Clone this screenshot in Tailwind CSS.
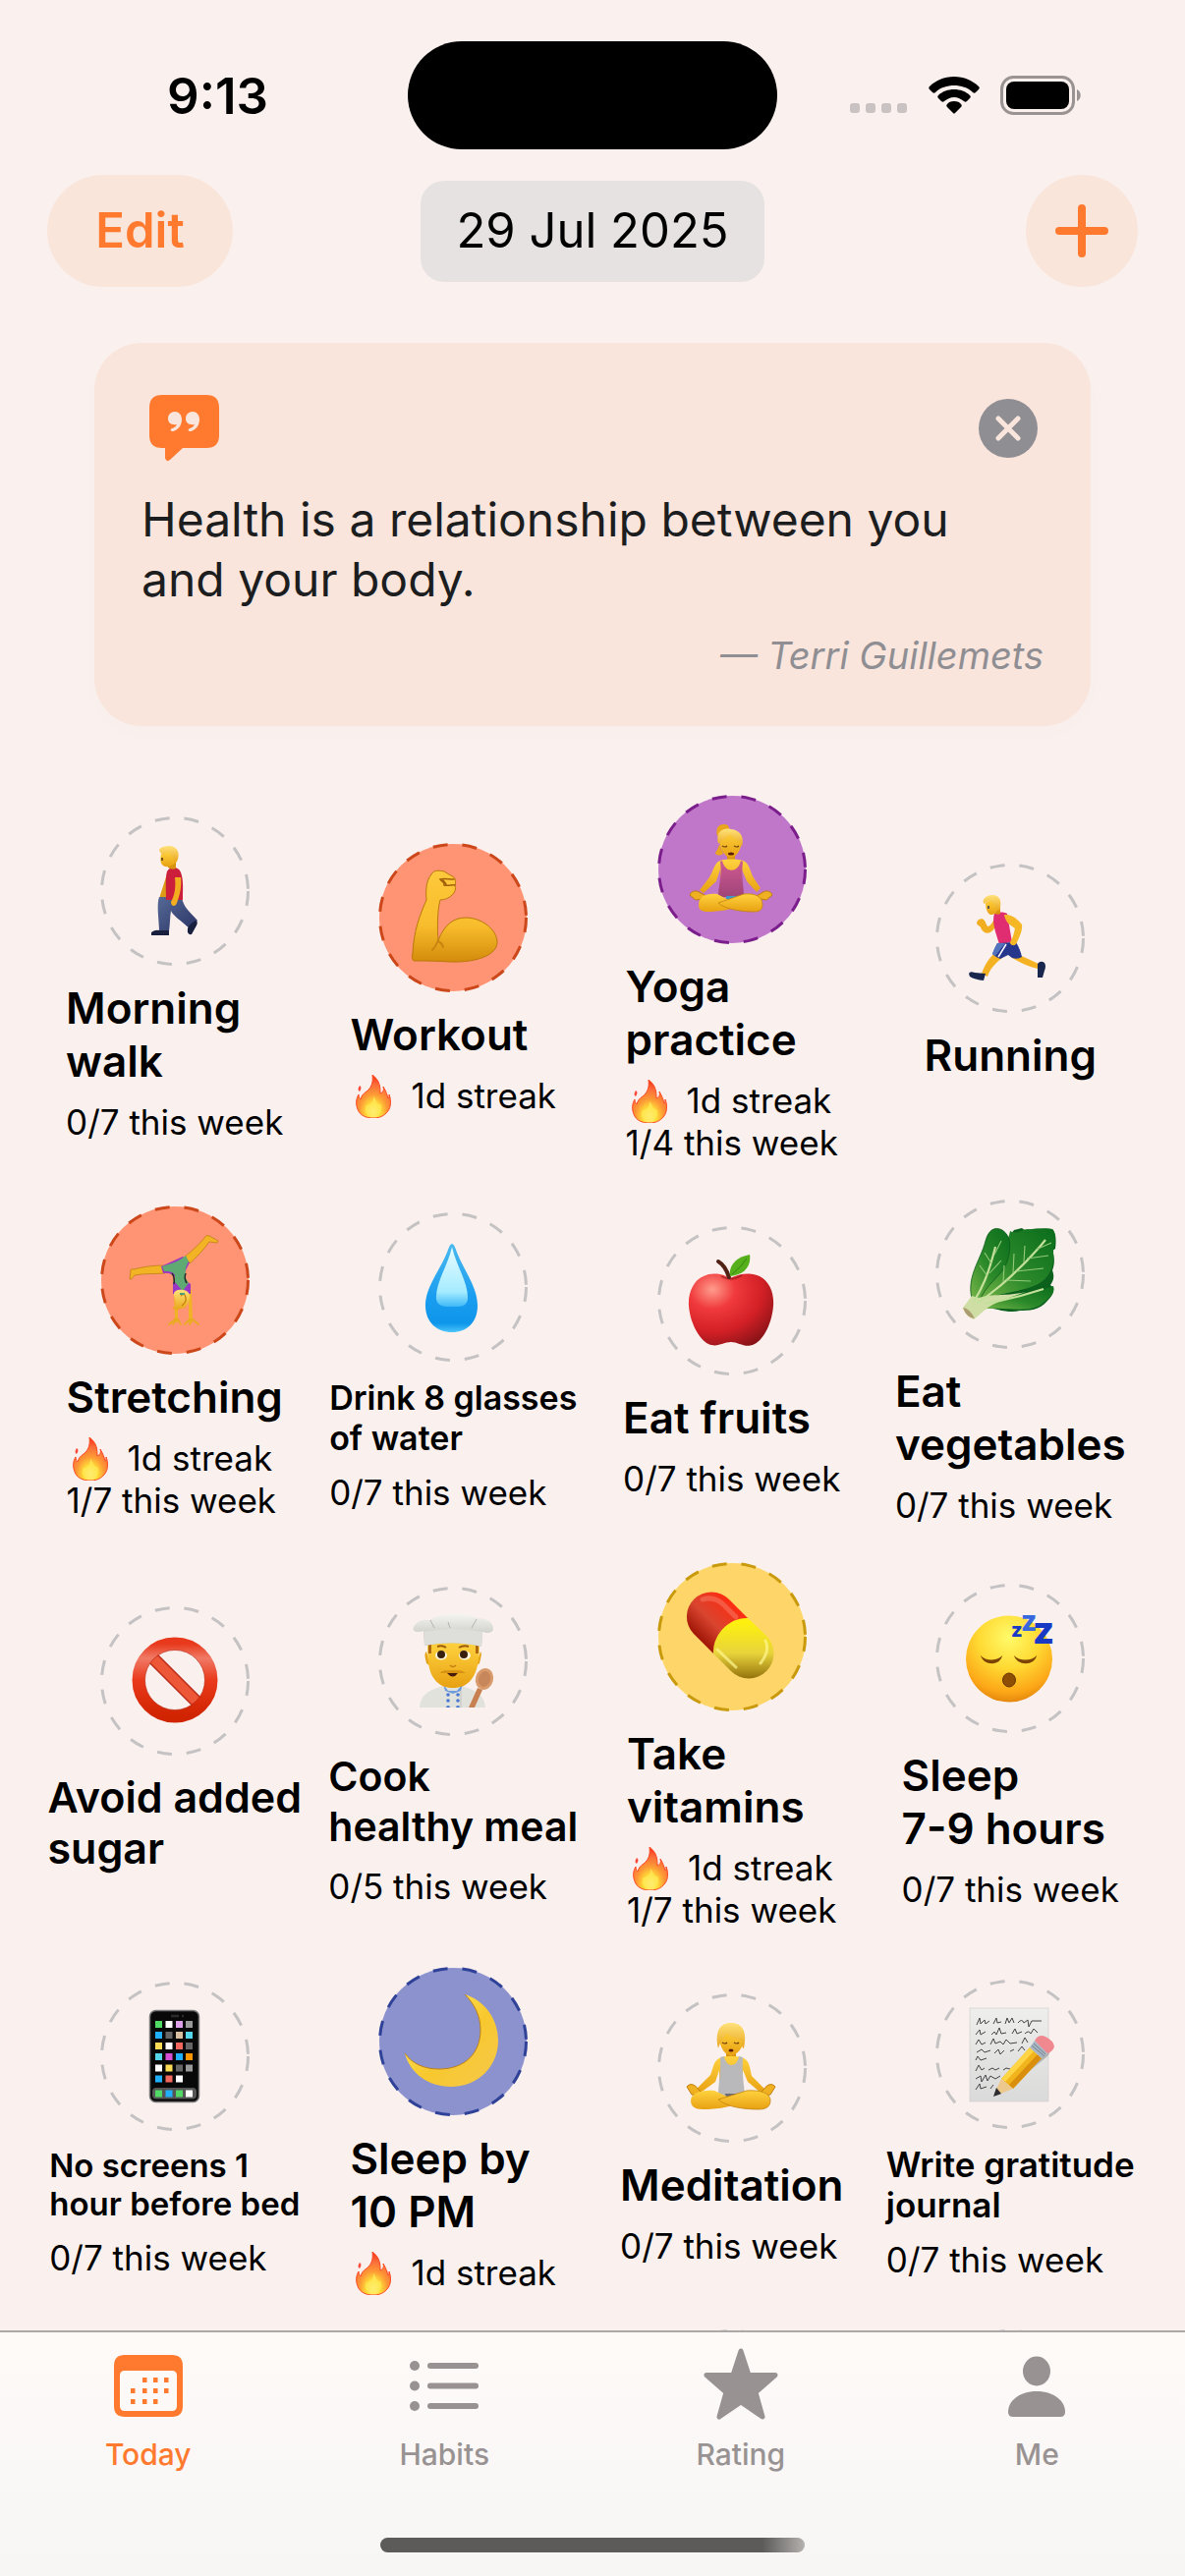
<!DOCTYPE html>
<html lang="en">
<head>
<meta charset="utf-8">
<meta name="viewport" content="width=device-width, initial-scale=1">
<title>Habit Tracker</title>
<script src="https://cdn.jsdelivr.net/npm/@tailwindcss/browser@4"></script>
</head>
<body class="bg-[#faf1ef] font-['Inter','Liberation_Sans',sans-serif] text-black">

<!-- Shared gradients and symbols -->
<svg width="0" height="0" class="absolute" aria-hidden="true">
  <defs>
    <linearGradient id="skin" x1="0" y1="0" x2="0" y2="1"><stop offset="0" stop-color="#ffd23f"/><stop offset="1" stop-color="#e8a112"/></linearGradient>
    <linearGradient id="arm" x1="0" y1="0" x2="0" y2="1"><stop offset="0" stop-color="#fdc93c"/><stop offset=".6" stop-color="#f8bd2c"/><stop offset="1" stop-color="#d48b0b"/></linearGradient>
    <linearGradient id="hair" x1="0" y1="0" x2="0" y2="1"><stop offset="0" stop-color="#ffe27a"/><stop offset="1" stop-color="#e9a51b"/></linearGradient>
    <linearGradient id="tankPink" x1="0" y1="0" x2="0" y2="1"><stop offset="0" stop-color="#cf5a92"/><stop offset="1" stop-color="#a04478"/></linearGradient>
    <linearGradient id="jeans" x1="0" y1="0" x2="1" y2="1"><stop offset="0" stop-color="#566a96"/><stop offset="1" stop-color="#2a3365"/></linearGradient>
    <linearGradient id="drop" x1="0" y1="0" x2="0" y2="1"><stop offset="0" stop-color="#49b9ee"/><stop offset=".6" stop-color="#1a9df0"/><stop offset=".9" stop-color="#0e96ea"/><stop offset="1" stop-color="#4cc6fb"/></linearGradient>
    <linearGradient id="dropShine" x1="0" y1="0" x2="0" y2="1"><stop offset="0" stop-color="#e9fbff"/><stop offset=".75" stop-color="#a5ecff"/><stop offset="1" stop-color="#3db9f8"/></linearGradient>
    <radialGradient id="apple" cx=".28" cy=".22" r=".9"><stop offset="0" stop-color="#ff9c8c"/><stop offset=".3" stop-color="#f03a3c"/><stop offset=".65" stop-color="#d32026"/><stop offset="1" stop-color="#851216"/></radialGradient>
    <linearGradient id="leaf" x1="0" y1="1" x2="1" y2="0"><stop offset="0" stop-color="#7cb84a"/><stop offset=".45" stop-color="#2c8a2a"/><stop offset="1" stop-color="#0a6c1c"/></linearGradient>
    <linearGradient id="ban" x1="0" y1="0" x2="0" y2="1"><stop offset="0" stop-color="#e8391c"/><stop offset=".2" stop-color="#f07a66"/><stop offset=".5" stop-color="#ea3a1c"/><stop offset="1" stop-color="#d02300"/></linearGradient>
    <linearGradient id="hat" x1="0" y1="0" x2="0" y2="1"><stop offset="0" stop-color="#f4f4f0"/><stop offset="1" stop-color="#b9b9b3"/></linearGradient>
    <radialGradient id="face" cx=".5" cy=".25" r=".8"><stop offset="0" stop-color="#fffb6a"/><stop offset=".45" stop-color="#ffd932"/><stop offset=".8" stop-color="#fca617"/><stop offset="1" stop-color="#d97a08"/></radialGradient>
    <linearGradient id="pillRed" gradientUnits="userSpaceOnUse" x1="38" y1="72" x2="74" y2="36"><stop offset="0" stop-color="#a31808"/><stop offset=".4" stop-color="#d9452f"/><stop offset="1" stop-color="#ff2a10"/></linearGradient>
    <linearGradient id="pillYellow" gradientUnits="userSpaceOnUse" x1="92" y1="62" x2="92" y2="118"><stop offset="0" stop-color="#fdf010"/><stop offset=".55" stop-color="#e8d33b"/><stop offset="1" stop-color="#96750e"/></linearGradient>
    <linearGradient id="moon" x1="0" y1="0" x2="1" y2="1"><stop offset="0" stop-color="#fff06a"/><stop offset=".55" stop-color="#f8c82e"/><stop offset="1" stop-color="#f5c84c"/></linearGradient>
    <linearGradient id="paper" x1="0" y1="0" x2="0" y2="1"><stop offset="0" stop-color="#eeeeec"/><stop offset="1" stop-color="#d9dad9"/></linearGradient>
    <radialGradient id="fire" cx=".5" cy=".85" r=".8"><stop offset="0" stop-color="#fffbb0"/><stop offset=".25" stop-color="#ffdf38"/><stop offset=".5" stop-color="#fd9a35"/><stop offset=".8" stop-color="#fb6a3a"/><stop offset="1" stop-color="#fa3a1a"/></radialGradient>
    <symbol id="ring" viewBox="0 0 152 152"><circle cx="76" cy="76" r="74.500" stroke="currentColor" stroke-width="3" stroke-dasharray="15 15"/></symbol>
    <symbol id="flame" viewBox="0 0 36 44">
      <path d="M17 0C25 6 25 13 25 19C28 18 29 15 28 12C31 17 32 20 33 24C34 23 34 22 34 20C36 25 36 31 34 35C31 41 25 44 18 44C10 44 4 41 2 35C0 30 0 25 3 20C3 23 4 24 5 25C6 21 8 19 11 17C16 13 18 8 17 0Z" fill="url(#fire)" stroke="#fb4a22" stroke-width="1"/>
      <path d="M4 11C6 12 6 14 4 17C2 16 2 14 4 11Z" fill="#fb4a3a"/>
      <path d="M18 22C22 26 20 30 25 30C28 34 25 42 18 42C11 42 8 36 11 31C15 31 18 28 18 22Z" fill="#ffe858" opacity=".75"/>
    </symbol>
  </defs>
</svg>

<div class="flex h-screen flex-col overflow-hidden">

  <!-- Status bar -->
  <div class="grid h-[178px] shrink-0 grid-cols-[1fr_376px_1fr] items-start pt-[42px]">
    <div class="flex h-[110px] items-center justify-center pl-7 text-[51px] font-semibold leading-none">9:13</div>
    <div class="h-[110px] rounded-full bg-black"></div>
    <div class="flex h-[110px] items-center pl-[74px]">
      <svg width="236" height="40" viewBox="0 0 236 40" role="img" aria-label="Wi-Fi connected, battery full">
        <g fill="#c8c3c2"><rect y="28" width="10" height="10" rx="3"/><rect x="16" y="28" width="10" height="10" rx="3"/><rect x="32" y="28" width="10" height="10" rx="3"/><rect x="48" y="28" width="10" height="10" rx="3"/></g>
        <path d="M106 1C116 1 125 5 131 11C132 12 132 13 131 14L128 17C127 18 126 18 125 17C120 12 113 10 106 10C99 10 92 12 87 17C86 18 85 18 84 17L81 14C80 13 80 12 81 11C87 5 96 1 106 1ZM106 14C112 14 118 16 122 20C123 21 123 22 122 23L119 26C118 27 117 27 116 26C113 24 110 22 106 22C102 22 99 24 96 26C95 27 94 27 93 26L90 23C89 22 89 21 90 20C94 16 100 14 106 14ZM106 26C109 26 112 27 113 29C114 30 114 31 113 32L107 38C106 39 106 39 105 38L99 32C98 31 98 30 99 29C100 27 103 26 106 26Z"/>
        <rect x="154.500" y="1.500" width="73" height="37" rx="12" fill="none" stroke="#999493" stroke-width="3"/>
        <rect x="159" y="6" width="64" height="28" rx="8"/>
        <path d="M231 14C236 16 236 24 231 26Z" fill="#999493"/>
      </svg>
    </div>
  </div>

  <!-- Toolbar -->
  <header class="grid shrink-0 grid-cols-[1fr_auto_1fr] items-center px-12">
    <button class="h-[114px] w-[189px] rounded-full bg-[#fae5db] text-[49px] font-semibold text-[#ff7a2f]">Edit</button>
    <button class="h-[103px] rounded-[24px] bg-[#e7e2e2] px-9 text-[49px]">29 Jul 2025</button>
    <button aria-label="Add habit" class="flex size-[114px] items-center justify-center justify-self-end rounded-full bg-[#fae5db]">
      <svg width="56" height="56" viewBox="0 0 56 56" fill="none" stroke="#ff7a2f" stroke-width="8" stroke-linecap="round"><path d="M28 5V51M5 28H51"/></svg>
    </button>
  </header>

  <main class="min-h-0 flex-1 overflow-hidden">
    <!-- Quote of the day -->
    <section class="mx-24 mt-[57px] rounded-[48px] bg-[#f9e5dc] p-12 shadow-[0_8px_24px_rgba(0,0,0,0.01)]">
      <div class="flex h-[77px] items-center justify-between pl-2 pr-1.5">
        <svg width="71" height="68" viewBox="0 0 71 68" aria-hidden="true">
          <path d="M13 0H58Q71 0 71 13V41Q71 54 58 54H34L21 66Q17 69 16 64V54H13Q0 54 0 41V13Q0 0 13 0Z" fill="#ff7a2f"/>
          <path id="mark" d="M26 17C30 17 33 20 33 25C33 31 29 36 24 37C21 37 21 35 23 34C26 33 27 32 28 30C22 31 19 28 19 24C19 20 22 17 26 17Z" fill="#f9e5dc"/>
          <use href="#mark" x="18"/>
        </svg>
        <button aria-label="Close quote" class="flex size-[60px] items-center justify-center rounded-full bg-[#8f8e93]">
          <svg width="28" height="28" viewBox="0 0 28 28" fill="none" stroke="#f9e5dc" stroke-width="5" stroke-linecap="round"><path d="M4 4L24 24M24 4L4 24"/></svg>
        </button>
      </div>
      <p class="mt-6 text-[48px] leading-[61px] text-[#1c1d1f]">Health is a relationship between you<br>and your body.</p>
      <p class="mt-6 text-right text-[38px] italic leading-[47px] text-[#8f8e93]">— Terri Guillemets</p>
    </section>

    <!-- Habits -->
    <ul class="mt-[70px] grid grid-cols-4 items-center gap-x-6 gap-y-9 px-12">

      <li class="flex flex-col items-center gap-4">
        <svg class="size-[152px] text-[#c4c2c3]" viewBox="0 0 152 152" fill="none" aria-hidden="true">
          <use href="#ring"/>
          <path d="M60 84C62 76 66 66 68 58L72 66L66 88C63 91 60 88 60 84Z" fill="#dd9b14"/>
          <path d="M60 82H83C84 92 92 98 99 106L91 114C82 106 74 101 72 96C71 102 71 110 70 117H60C60 106 57 90 60 82Z" fill="url(#jeans)"/>
          <path d="M68 56C71 50 80 51 82 57C85 65 84 74 84 85H67C67 74 66 64 68 56Z" fill="#cc1f3b"/>
          <path d="M76 62L82 62C83 72 81 80 78 88C77 92 72 92 72 87C76 80 77 72 76 62Z" fill="#f3ae20"/>
          <path d="M69 46H77V53Q73 55 69 52Z" fill="#d9920f"/>
          <path d="M62 38C61 43 61 48 64 50C68 53 76 50 78 44L77 36H65Z" fill="url(#skin)"/>
          <path d="M61 36C58 34 62 30 70 30C79 30 82 38 78 46C76 48 75 45 74 42C72 40 71 36 68 36C66 39 62 39 61 36Z" fill="url(#hair)"/>
          <path d="M63 42V45" stroke="#51300a" stroke-width="1.500"/>
          <path d="M52 118Q56 115 60 116H70V121H52ZM89 114C90 111 93 108 97 106Q100 107 98 111L93 120Q88 121 89 114Z" fill="#18203d"/>
        </svg>
        <div>
          <h2 class="text-[44px] font-semibold leading-[54px]">Morning<br>walk</h2>
          <div class="mt-3.5 text-[35px] leading-[43px]"><p>0/7 this week</p></div>
        </div>
      </li>

      <li class="flex flex-col items-center gap-4">
        <svg class="size-[152px] text-[#cc471a]" viewBox="0 0 152 152" fill="none" aria-hidden="true">
          <circle cx="76" cy="76" r="75" fill="#fe9473"/><use href="#ring"/>
          <path d="M49 58C48 48 49 38 54 32C57 27 62 28 67 29L77 35C79 37 79 40 78 43C81 50 72 58 63 58C60 68 60 88 61 99C67 84 76 76 89 76C106 76 121 89 121 101C121 114 100 122 73 121C58 120 44 120 37 120C34 120 34 116 35 112C36 90 42 74 49 58Z" fill="url(#arm)" stroke="#b9790b" stroke-width="1"/>
          <path d="M77 37C71 37 66 36 63 37C65 40 68 40 67 43C72 44 76 42 78 43M66 38L69 42" stroke="#a2600a" stroke-width="1.500" stroke-linecap="round"/>
          <path d="M61 99Q59 105 55 109M61 100Q65 102 66 106" stroke="#c8850f" stroke-width="2" stroke-linecap="round"/>
        </svg>
        <div>
          <h2 class="text-[44px] font-semibold leading-[54px]">Workout</h2>
          <div class="mt-3.5 text-[35px] leading-[43px]"><p class="flex h-[43px]"><svg class="ml-1.5 mr-5 h-11 w-9" aria-label="Streak"><use href="#flame"/></svg>1d streak</p></div>
        </div>
      </li>

      <li class="flex flex-col items-center gap-4">
        <svg class="size-[152px] text-[#7b1e8c]" viewBox="0 0 152 152" fill="none" aria-hidden="true">
          <circle cx="76" cy="76" r="75" fill="#c077ca"/><use href="#ring"/>
          <path d="M63 50C62 56 59 58 59 60Q63 63 67 60ZM61 42C59 34 62 30 68 30C73 30 74 34 72 37Z" fill="#e9a51b"/>
          <path d="M71 56H79V66H71Z" fill="#d9920f"/>
          <path d="M64 67C69 65 81 65 87 67C93 69 94 76 97 83L105 95L101 99L91 88L86 76V100H64V76L60 88L47 100L43 97L53 84C57 77 58 69 64 67Z" fill="url(#skin)"/>
          <path d="M63 44C63 34 86 34 86 46C86 55 80 64 75 64C69 64 63 55 63 44Z" fill="url(#skin)"/>
          <path d="M62 50C59 38 66 33 75 35C84 36 89 42 86 53C84 46 77 44 73 40C71 44 65 47 62 50Z" fill="url(#hair)"/>
          <path d="M66 52Q69 54 71 52M78 52Q81 54 83 52" stroke="#6d420b" stroke-width="1.200"/>
          <ellipse cx="75" cy="60" rx="3" ry="1.500" fill="#5b1b0a"/>
          <path d="M66 67C69 80 82 80 85 67L87 68C85 84 88 92 88 104H62C62 92 66 84 64 68Z" fill="url(#tankPink)"/>
          <path d="M70 103H82L79 116H71Z" fill="#3a98cf"/>
          <path d="M33 102C35 97 40 97 44 100L50 103Q46 107 39 107ZM117 102C115 97 110 97 106 100L101 103Q105 107 111 107Z" fill="#efb022" stroke="#c07d0c"/>
          <path d="M42 112C42 103 50 100 61 101L82 112C77 117 62 119 51 119C45 119 42 117 42 112Z" fill="url(#skin)"/>
          <path d="M107 112C107 103 99 100 88 101L62 110C69 117 88 119 98 119C104 119 107 117 107 112Z" fill="url(#skin)" stroke="#c4830e" stroke-width=".8"/>
        </svg>
        <div>
          <h2 class="text-[44px] font-semibold leading-[54px]">Yoga<br>practice</h2>
          <div class="mt-3.5 text-[35px] leading-[43px]"><p class="flex h-[43px]"><svg class="ml-1.5 mr-5 h-11 w-9" aria-label="Streak"><use href="#flame"/></svg>1d streak</p><p>1/4 this week</p></div>
        </div>
      </li>

      <li class="flex flex-col items-center gap-4">
        <svg class="size-[152px] text-[#c4c2c3]" viewBox="0 0 152 152" fill="none" aria-hidden="true">
          <use href="#ring"/>
          <path d="M62 53C58 60 56 64 53 64L50 58C48 55 43 56 42 60C42 63 45 63 46 65C48 70 52 72 56 70C60 67 63 62 65 58Z" fill="#f0ae20"/>
          <path d="M79 90L105 102L104 107C96 105 86 101 78 96Z" fill="#f4b223"/>
          <path d="M62 90C54 96 50 104 47 112L53 115C56 106 62 101 69 95Z" fill="#f4b223"/>
          <path d="M60 51C64 49 70 49 73 51L78 80L65 82C62 72 57 60 60 51Z" fill="#e02d72"/>
          <path d="M63 81L82 80C85 85 87 90 88 95Q84 98 78 96L74 93L66 97Q61 95 58 92Z" fill="#26368c"/>
          <path d="M63 81L71 81L61 94L58 92C59 88 61 84 63 81Z" fill="#5374bd"/><path d="M72 82L64 95" stroke="#fff" stroke-width="1.500"/>
          <path d="M70 52C78 51 84 57 88 62C89 68 85 76 82 82C79 85 74 82 77 78C79 75 80 70 81 66C75 62 71 59 70 52Z" fill="#f6b724"/>
          <path d="M60 44L66 43V51Q62 53 60 50Z" fill="#d9920f"/>
          <path d="M51 40C51 46 53 51 56 52C61 53 65 47 64 40L58 36Z" fill="url(#skin)"/>
          <path d="M50 41C46 38 51 32 58 32C66 32 68 39 65 48C63 49 63 46 61 44C60 42 59 40 57 38C54 38 51 39 50 41Z" fill="url(#hair)"/>
          <path d="M54 43V46" stroke="#2c3a52" stroke-width="1.500"/>
          <path d="M34 112Q35 109 40 111L51 112L49 119Q40 118 35 115ZM104 102Q107 98 111 101Q113 104 111 109L109 116H104Z" fill="#18264d"/>
        </svg>
        <div>
          <h2 class="mb-3.5 text-[44px] font-semibold leading-[54px]">Running</h2>
        </div>
      </li>

      <li class="flex flex-col items-center gap-4">
        <svg class="size-[152px] text-[#cc471a]" viewBox="0 0 152 152" fill="none" aria-hidden="true">
          <circle cx="76" cy="76" r="75" fill="#fe9473"/><use href="#ring"/>
          <path d="M86 52C95 45 101 39 106 33Q108 29 111 31L120 36L119 38L111 37C106 44 98 53 91 59ZM65 61C52 61 42 63 34 65Q30 64 31 67L30 75Q32 76 35 71C45 69 54 70 66 69Z" fill="#f2b325" stroke="#b87a10" stroke-width=".7"/>
          <path d="M75 86H79V119H76ZM90 86H93L94 119H90Z" fill="#f0b326"/>
          <path d="M70 121L76 116H79L82 121M74 121L77 117M86 121L91 116H94L100 121M91 121L93 117" stroke="#e8aa20" stroke-width="1.800" stroke-linecap="round"/>
          <path d="M62 62L84 52L91 58L86 68V76L92 80V90H74V80L76 73Q72 68 64 69Z" fill="#9a35c4"/>
          <path d="M69 60C77 58 82 55 87 51L90 57C87 62 86 67 87 74L90 79L84 87L76 78V71C74 67 69 67 65 67L63 62Z" fill="#5fa973"/>
          <path d="M73 69Q76 73 75 80M87 69Q85 74 88 79" stroke="#222b26" stroke-width="1.500"/>
          <path d="M75 90C75 84 91 84 91 92C91 99 87 106 82 105C79 107 75 106 73 104C81 101 75 97 75 90Z" fill="url(#hair)"/><path d="M82 92Q86 88 87 94Q88 98 83 102" stroke="#c27d0c" stroke-width="1.300"/><path d="M81 90L86 90" stroke="#4b9e78" stroke-width="2"/>
        </svg>
        <div>
          <h2 class="text-[44px] font-semibold leading-[54px]">Stretching</h2>
          <div class="mt-3.5 text-[35px] leading-[43px]"><p class="flex h-[43px]"><svg class="ml-1.5 mr-5 h-11 w-9" aria-label="Streak"><use href="#flame"/></svg>1d streak</p><p>1/7 this week</p></div>
        </div>
      </li>

      <li class="flex flex-col items-center gap-4">
        <svg class="size-[152px] text-[#c4c2c3]" viewBox="0 0 152 152" fill="none" aria-hidden="true">
          <use href="#ring"/>
          <path d="M75 32Q77 32 79 38C86 58 101 75 101 95C101 112 90 122 75 122C60 122 48 112 48 95C48 75 64 58 71 38Q73 32 75 32Z" fill="url(#drop)"/>
          <path d="M75 35C79 54 92 72 91 88C90 97 82 96 75 96C67 96 60 96 59 88C58 72 71 54 75 35Z" fill="url(#dropShine)"/>
        </svg>
        <div>
          <h2 class="text-[34px] font-semibold leading-[41px]">Drink 8 glasses<br>of water</h2>
          <div class="mt-3.5 text-[35px] leading-[43px]"><p>0/7 this week</p></div>
        </div>
      </li>

      <li class="flex flex-col items-center gap-4">
        <svg class="size-[152px] text-[#c4c2c3]" viewBox="0 0 152 152" fill="none" aria-hidden="true">
          <use href="#ring"/>
          <path d="M74 53C82 49 94 46 104 51C114 56 119 68 118 81C117 97 109 115 99 120C90 125 83 118 75 118C67 118 61 124 52 120C42 115 33 97 32 81C31 68 37 55 47 51C56 46 68 49 74 53Z" fill="url(#apple)"/>
          <path d="M65 51Q75 57 86 50" stroke="#8d1217" stroke-width="2" opacity=".6"/>
          <path d="M62 36Q69 40 73 52" stroke="#522116" stroke-width="4" stroke-linecap="round"/>
          <path d="M74 51C72 39 82 31 94 29C96 41 88 50 74 51Z" fill="#55b01b"/><path d="M76 49Q86 41 91 33" stroke="#2e8713"/>
        </svg>
        <div>
          <h2 class="text-[44px] font-semibold leading-[54px]">Eat fruits</h2>
          <div class="mt-3.5 text-[35px] leading-[43px]"><p>0/7 this week</p></div>
        </div>
      </li>

      <li class="flex flex-col items-center gap-4">
        <svg class="size-[152px] text-[#c4c2c3]" viewBox="0 0 152 152" fill="none" aria-hidden="true">
          <use href="#ring"/>
          <path d="M52 110C50 80 68 45 80 31L88 29L92 32C100 28 112 30 119 30C123 34 123 42 122 50L119 52C122 60 121 67 119 72C122 80 119 84 117 87C123 91 120 97 114 103C106 113 95 113 86 113C75 116 62 111 52 110Z" fill="#0b611c"/>
          <path d="M43 107C44 80 70 62 76 32C84 36 88 30 94 30C102 31 112 28 119 30C125 38 120 46 120 53C121 63 119 72 113 79C99 96 64 91 43 107Z" fill="url(#leaf)"/>
          <path d="M38 104C30 80 46 62 51 42C54 31 60 27 68 31C77 37 77 48 74 60C69 79 50 85 44 106Z" fill="url(#leaf)" stroke="#0b5c19" stroke-width=".8"/>
          <path d="M46 112C65 95 92 98 120 88C123 97 112 102 106 108C90 116 67 108 46 112Z" fill="url(#leaf)"/>
          <path d="M28 110L37 98L44 100C60 95 70 99 92 94C72 101 60 105 52 111L39 122Q30 118 28 110Z" fill="#cedea5"/>
          <path d="M39 104C47 91 54 77 61 48M43 105C63 92 91 67 112 41M50 106Q80 101 110 91" stroke="#c4e09a" stroke-width="2.200"/>
          <path d="M53 78L45 67M57 65L50 54M55 75L67 62M60 56L67 42M69 84L70 67M79 75L80 55M90 64L91 47M72 82L97 83M82 73L110 70M93 60L115 57M102 51L118 44" stroke="#94ca79" stroke-width="1.100"/>
          <path d="M28 110Q34 110 40 121Q32 121 28 110Z" fill="#ac9c70"/>
        </svg>
        <div>
          <h2 class="text-[44px] font-semibold leading-[54px]">Eat<br>vegetables</h2>
          <div class="mt-3.5 text-[35px] leading-[43px]"><p>0/7 this week</p></div>
        </div>
      </li>

      <li class="flex flex-col items-center gap-4">
        <svg class="size-[152px] text-[#c4c2c3]" viewBox="0 0 152 152" fill="none" aria-hidden="true">
          <use href="#ring"/>
          <path d="M50 49L102 101" stroke="#bb2b16" stroke-width="13"/><path d="M50 49L102 101" stroke="#ee5638" stroke-width="10"/>
          <circle cx="76" cy="75" r="37" stroke="url(#ban)" stroke-width="13"/>
          <circle cx="76" cy="75" r="30.500" stroke="#b3200a" stroke-width="1" opacity=".6"/>
        </svg>
        <div>
          <h2 class="mb-3.5 text-[43px] font-semibold leading-[52px]">Avoid added<br>sugar</h2>
        </div>
      </li>

      <li class="flex flex-col items-center gap-4">
        <svg class="size-[152px] text-[#c4c2c3]" viewBox="0 0 152 152" fill="none" aria-hidden="true">
          <use href="#ring"/>
          <path d="M42 123C43 111 49 106 66 101H85C101 106 108 111 109 123Z" fill="#e2e2dc"/>
          <path d="M66 99L68 106L76 109L84 106L86 99L80 106H71Z" fill="#6d9bdc"/><path d="M84 106V123" stroke="#c3c3bd"/>
          <g fill="#4778d3"><circle cx="71" cy="110" r="1.800"/><circle cx="81" cy="110" r="1.800"/><circle cx="71" cy="116" r="1.800"/><circle cx="81" cy="116" r="1.800"/><path d="M69 123a2 2 0 014 0ZM79 123a2 2 0 014 0Z"/></g>
          <path d="M49 66Q46 67 49 78L53 81ZM104 66Q106 67 103 78L99 81Z" fill="#e4a215"/>
          <path d="M50 57H103C103 73 101 87 95 94C90 101 83 103 76 103C69 103 62 101 57 94C51 87 50 73 50 57Z" fill="url(#skin)"/>
          <path d="M51 58H54V68H51ZM99 58H102V68H99Z" fill="#af680d"/>
          <ellipse cx="64" cy="70" rx="6" ry="4.500" fill="#fff6dc"/><ellipse cx="88" cy="70" rx="6" ry="4.500" fill="#fff6dc"/>
          <circle cx="64" cy="69" r="4" fill="#39200c"/><circle cx="87" cy="69" r="4" fill="#39200c"/>
          <path d="M60 61Q65 59 69 62M82 62Q87 59 92 61" stroke="#9c5c0d" stroke-width="2"/>
          <path d="M73 80Q76 83 79 80" stroke="#c57d10" stroke-width="1.500"/><path d="M70 88H81Q76 95 70 88Z" fill="#471a09"/>
          <path d="M62 88C67 84 71 86 76 85C80 86 84 84 89 88Q76 88 62 88Z" fill="#d79213"/>
          <path d="M47 60L46 45C35 48 33 43 38 38C41 34 47 33 52 34C61 27 88 26 101 32C112 32 117 37 117 43C117 47 110 48 106 46L105 61Q76 54 47 60Z" fill="url(#hat)"/>
          <path d="M47 46Q76 40 106 46L105 61Q76 54 47 60Z" fill="#dededa"/><path d="M53 34L57 42M100 33L95 42M71 36L73 42" stroke="#b4b4ae"/>
          <path d="M92 123L101 103L106 105L98 123Z" fill="#c98050"/><ellipse cx="108" cy="94" rx="9" ry="11" fill="#d99b6c" transform="rotate(15 108 94)"/><ellipse cx="108" cy="94" rx="6" ry="8" fill="#c8875a" transform="rotate(15 108 94)"/>
        </svg>
        <div>
          <h2 class="text-[41px] font-semibold leading-[51px]">Cook<br>healthy meal</h2>
          <div class="mt-3.5 text-[35px] leading-[43px]"><p>0/5 this week</p></div>
        </div>
      </li>

      <li class="flex flex-col items-center gap-4">
        <svg class="size-[152px] text-[#c99a0c]" viewBox="0 0 152 152" fill="none" aria-hidden="true">
          <circle cx="76" cy="76" r="75" fill="#fdd568"/><use href="#ring"/>
          <path d="M92 57L73 38A25 25 0 0037 73L57 93Z" fill="url(#pillRed)"/>
          <path d="M92 57L111 75A25 25 0 0175 111L57 93C56 74 73 56 92 57Z" fill="url(#pillYellow)"/>
          <path d="M46 38Q58 34 68 44L80 56" stroke="#fa927d" stroke-width="5" stroke-linecap="round" opacity=".4"/>
          <path d="M61 89L80 107M110 80Q115 90 105 103" stroke="#fff792" stroke-width="3" stroke-linecap="round" opacity=".7"/>
        </svg>
        <div>
          <h2 class="text-[44px] font-semibold leading-[54px]">Take<br>vitamins</h2>
          <div class="mt-3.5 text-[35px] leading-[43px]"><p class="flex h-[43px]"><svg class="ml-1.5 mr-5 h-11 w-9" aria-label="Streak"><use href="#flame"/></svg>1d streak</p><p>1/7 this week</p></div>
        </div>
      </li>

      <li class="flex flex-col items-center gap-4">
        <svg class="size-[152px] text-[#c4c2c3]" viewBox="0 0 152 152" fill="none" aria-hidden="true">
          <use href="#ring"/>
          <circle cx="75" cy="76.500" r="44" fill="url(#face)"/>
          <path d="M46 73C51 79 63 79 68 73C66 84 49 84 46 73ZM80 73C85 79 98 79 103 73C101 84 83 84 80 73Z" fill="#7c4304"/>
          <ellipse cx="75" cy="98" rx="6.500" ry="7" fill="#8e4f05" stroke="#653500"/>
          <g fill="#1839c4" font-family="Inter, sans-serif" font-weight="800"><text x="77" y="54" font-size="20">z</text><text x="87" y="48" font-size="28" fill="#3868dd">z</text><text x="99" y="61" font-size="38">z</text></g>
        </svg>
        <div>
          <h2 class="text-[44px] font-semibold leading-[54px]">Sleep<br>7-9 hours</h2>
          <div class="mt-3.5 text-[35px] leading-[43px]"><p>0/7 this week</p></div>
        </div>
      </li>

      <li class="flex flex-col items-center gap-4">
        <svg class="size-[152px] text-[#c4c2c3]" viewBox="0 0 152 152" fill="none" aria-hidden="true">
          <use href="#ring"/>
          <rect x="50.500" y="29.500" width="50" height="93" rx="6" fill="#080808" stroke="#777" stroke-width="1.500"/><path d="M72 35H80M83 35H85" stroke="#2b2b2b" stroke-width="2.500"/>
          <rect x="53" y="108" width="45" height="11.500" rx="4" fill="#555"/>
          <g stroke-width="7">
            <path d="M56 43.500H63M56 114H63M77 114H84" stroke="#51d966"/>
            <path d="M66.500 43.500H73.500M66.500 65.500H73.500M56 88H63M77 99H84M87 114H94" stroke="#fff"/>
            <path d="M77 43.500H84" stroke="#dda1ea"/><path d="M87 43.500H94M87 88H94" stroke="#999"/>
            <path d="M56 54.500H63M77 76.500H84M56 99H63M66.500 114H73.500" stroke="#20b0fb"/>
            <path d="M66.500 54.500H73.500M87 65.500H94M77 88H84" stroke="#666"/>
            <path d="M77 54.500H84" stroke="#d8bfa2"/><path d="M87 54.500H94M56 76.500H63" stroke="#55d6eb"/>
            <path d="M56 65.500H63M66.500 88H73.500" stroke="#fbdc56"/><path d="M77 65.500H84M66.500 99H73.500" stroke="#f2675e"/>
            <path d="M66.500 76.500H73.500" stroke="#d84ed7"/><path d="M87 76.500H94" stroke="#fd9500"/>
          </g>
        </svg>
        <div>
          <h2 class="text-[33px] font-semibold leading-[39px]">No screens 1<br>hour before bed</h2>
          <div class="mt-3.5 text-[35px] leading-[43px]"><p>0/7 this week</p></div>
        </div>
      </li>

      <li class="flex flex-col items-center gap-4">
        <svg class="size-[152px] text-[#2f4297]" viewBox="0 0 152 152" fill="none" aria-hidden="true">
          <circle cx="76" cy="76" r="75" fill="#8b92ce"/><use href="#ring"/>
          <path d="M88 28C108 34 122 53 122 75C122 102 101 122 74 122C51 122 32 108 27 88C35 99 47 104 62 104C88 104 104 88 104 64C104 50 98 38 88 28Z" fill="url(#moon)"/>
          <path d="M27 88C35 99 47 104 62 104C88 104 104 88 104 64C104 50 98 38 88 28" stroke="#bd8118" stroke-width="1"/>
        </svg>
        <div>
          <h2 class="text-[44px] font-semibold leading-[54px]">Sleep by<br>10 PM</h2>
          <div class="mt-3.5 text-[35px] leading-[43px]"><p class="flex h-[43px]"><svg class="ml-1.5 mr-5 h-11 w-9" aria-label="Streak"><use href="#flame"/></svg>1d streak</p></div>
        </div>
      </li>

      <li class="flex flex-col items-center gap-4">
        <svg class="size-[152px] text-[#c4c2c3]" viewBox="0 0 152 152" fill="none" aria-hidden="true">
          <use href="#ring"/>
          <path d="M70 56H80V68H70Z" fill="#d9920f"/>
          <path d="M63 66C68 63 82 63 88 66C94 69 94 76 96 84L109 97L105 101L92 90L87 78V102H63V78L59 90L44 101L40 97L54 83C57 76 57 69 63 66Z" fill="url(#skin)"/>
          <path d="M63 44C63 34 88 34 88 46C88 55 81 63 75 63C69 63 63 55 63 44Z" fill="url(#skin)"/>
          <path d="M62 56C58 38 64 30 75 30C86 30 92 38 88 56C86 56 86 51 86 48C79 46 72 43 70 40C69 44 64 48 62 56Z" fill="url(#hair)"/>
          <path d="M66 50Q69 52 71 50M78 50Q81 52 83 50" stroke="#6d420b" stroke-width="1.200"/><ellipse cx="75" cy="58" rx="2.500" ry="1.500" fill="#5b1b0a"/>
          <path d="M64 65L68 64C70 76 81 76 83 64L87 65C86 82 88 90 89 104H62C62 90 65 82 64 65Z" fill="#b9b9bb"/>
          <path d="M69 102H82L80 114H71Z" fill="#6b6c73"/>
          <path d="M30 95C33 91 38 92 42 98L46 102Q40 105 35 103ZM120 95C117 91 112 92 108 98L104 102Q110 105 115 103Z" fill="#efb022" stroke="#c07d0c"/>
          <path d="M34 109C34 102 44 98 58 99L82 110C77 116 60 118 46 118C38 118 34 115 34 109Z" fill="url(#skin)"/>
          <path d="M115 109C115 102 106 98 91 99L62 108C71 116 89 118 103 118C111 118 115 115 115 109Z" fill="url(#skin)" stroke="#c4830e" stroke-width=".8"/>
        </svg>
        <div>
          <h2 class="text-[44px] font-semibold leading-[54px]">Meditation</h2>
          <div class="mt-3.5 text-[35px] leading-[43px]"><p>0/7 this week</p></div>
        </div>
      </li>

      <li class="flex flex-col items-center gap-4">
        <svg class="size-[152px] text-[#c4c2c3]" viewBox="0 0 152 152" fill="none" aria-hidden="true">
          <use href="#ring"/>
          <rect x="35" y="29" width="80" height="95" fill="url(#paper)" stroke="#cfcfce" stroke-width=".7"/>
          <path d="M42 46L45 39L46 45L50 41L51 45L55 42M59 45L62 39L63 44L67 43M71 45L73 39L75 44L78 39L80 44M84 44Q88 39 90 44L94 41L95 48L98 42L108 42M41 56L45 51L46 56L51 53M57 56L60 53L62 56L65 49L67 55L72 54M78 55L81 50L83 55L88 53M91 55Q95 51 97 55L100 50L104 54M41 66L44 61L47 66L51 64M56 66L59 60L61 65L66 63L69 66L72 61L76 65L83 64M88 65L91 59L94 64M42 74L47 71L50 74L56 72M60 75L64 71L66 76L70 72M76 73L80 71M84 73L88 68L91 72M41 82L43 78L46 82L52 80M41 93L44 87L47 92L50 90M54 92L58 90L61 92L65 90M69 92L72 90L76 91M41 101L46 98L47 104L51 97L53 103L56 98L61 101L66 98M41 112L45 106L46 111L52 109M56 111L59 107" stroke="#444" stroke-width="1" stroke-linejoin="round"/>
          <path d="M63 119L114 78L119 70L102 84Z" fill="#555" opacity=".35"/>
          <path d="M96 69L108 80L79 111L67 101Z" fill="#f2b41c"/><path d="M96 69L100 73L71 104L67 101Z" fill="#ffd545"/><path d="M104 76L108 80L79 111L75 107Z" fill="#d98e0d"/>
          <path d="M67 101L79 111L64 117L61 114Z" fill="#edc88d"/><path d="M62 110L67 116L59 119Z" fill="#2d2d31"/>
          <path d="M96 69L101 62L114 74L108 80Z" fill="#a9b7c5"/><path d="M98 67L111 78M100 65L112 76" stroke="#74808c"/>
          <path d="M101 62Q105 55 112 58Q120 62 121 68Q120 73 114 75Z" fill="#f0888f"/>
        </svg>
        <div>
          <h2 class="text-[35px] font-semibold leading-[41px]">Write gratitude<br>journal</h2>
          <div class="mt-3.5 text-[35px] leading-[43px]"><p>0/7 this week</p></div>
        </div>
      </li>

      <li class="col-start-3 flex flex-col items-center"><svg class="size-[152px] text-[#c4c2c3]" fill="none" aria-hidden="true"><use href="#ring"/></svg></li>
      <li class="flex flex-col items-center"><svg class="size-[152px] text-[#c4c2c3]" fill="none" aria-hidden="true"><use href="#ring"/></svg></li>
    </ul>
  </main>

  <!-- Tab bar -->
  <nav class="shrink-0 border-t-2 border-[#aba8a7] bg-linear-to-b from-[#fdfaf8] to-[#f8f6f5] pb-6 pt-4">
    <div class="grid grid-cols-4 text-[30px] font-medium leading-9 text-[#989392]">
      <a href="#today" aria-current="page" class="flex flex-col items-center gap-4 text-[#ff7a2f]">
        <svg width="76" height="74" viewBox="0 0 76 74" fill="currentColor" aria-hidden="true">
          <path fill-rule="evenodd" d="M14 7H62Q73 7 73 18V59Q73 70 62 70H14Q3 70 3 59V18Q3 7 14 7ZM14 23Q9 23 9 28V59Q9 64 14 64H62Q67 64 67 59V28Q67 23 62 23Z"/>
          <path d="M32 32.500H36.500M43 32.500H47.500M54 32.500H58.500M20 43.500H24.500M32 43.500H36.500M43 43.500H47.500M54 43.500H58.500M20 54.500H24.500M32 54.500H36.500M43 54.500H47.500" stroke="currentColor" stroke-width="5"/>
        </svg>
        Today
      </a>
      <a href="#habits" class="flex flex-col items-center gap-4">
        <svg width="76" height="74" viewBox="0 0 76 74" fill="currentColor" aria-hidden="true">
          <circle cx="8" cy="18" r="5"/><circle cx="8" cy="38.500" r="5"/><circle cx="8" cy="59" r="5"/>
          <rect x="21" y="15" width="52" height="6" rx="3"/><rect x="21" y="35.500" width="52" height="6" rx="3"/><rect x="21" y="56" width="52" height="6" rx="3"/>
        </svg>
        Habits
      </a>
      <a href="#rating" class="flex flex-col items-center gap-4">
        <svg width="76" height="74" viewBox="0 0 76 74" fill="currentColor" stroke="currentColor" stroke-width="5" stroke-linejoin="round" aria-hidden="true"><path d="M38 3L46 27.500H73L53 45L60 70L38 55L16 70L23 45L3 27.500H30Z"/></svg>
        Rating
      </a>
      <a href="#me" class="flex flex-col items-center gap-4">
        <svg width="76" height="74" viewBox="0 0 76 74" fill="currentColor" aria-hidden="true"><ellipse cx="38" cy="23.500" rx="14" ry="15"/><path d="M9 65C9 54 20 44 38 44C56 44 67 54 67 65Q67 70 62 70H14Q9 70 9 65Z"/></svg>
        Me
      </a>
    </div>
    <div class="mx-auto mt-[67px] h-[15px] w-[432px] rounded-full bg-linear-to-r from-[#5d5b59] from-90% to-[#b5b2b0]"></div>
  </nav>
</div>
</body>
</html>
